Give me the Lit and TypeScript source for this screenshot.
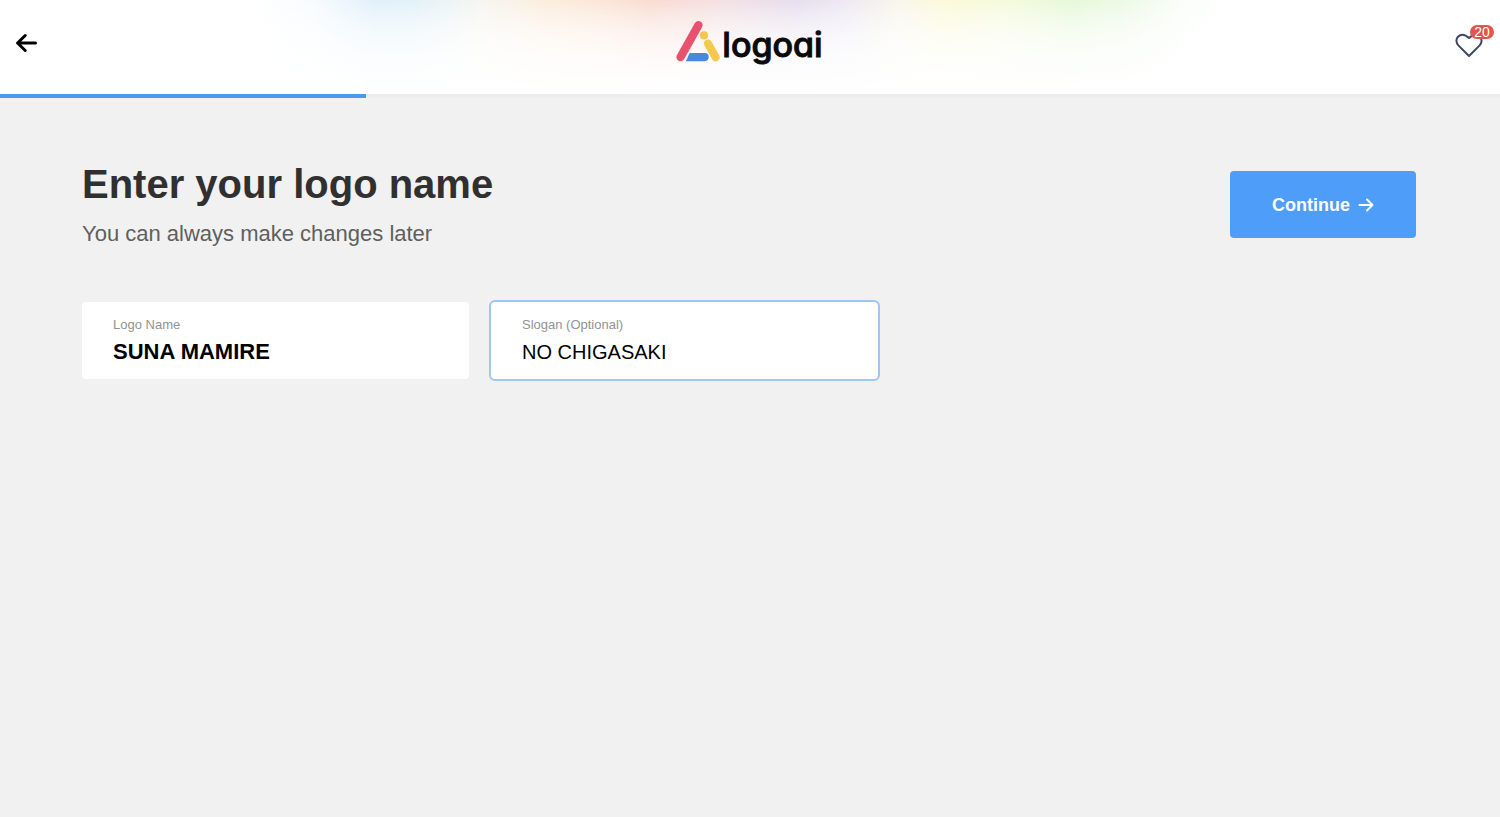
import { LitElement, html, css } from "lit";
import { customElement, state } from "lit/decorators.js";

@customElement("app-root")
export class AppRoot extends LitElement {
  @state() private logoName = "SUNA MAMIRE";
  @state() private slogan = "NO CHIGASAKI";
  @state() private favourites = 20;
  @state() private progress = 24.4;

  static styles = css`
    :host {
      display: block;
      min-height: 100vh;
      background: #f1f1f1;
      color: #303030;
      font-family: "Liberation Sans", Arial, sans-serif;
    }
    * {
      box-sizing: border-box;
    }
    .topbar {
      display: grid;
      grid-template-columns: 1fr auto 1fr;
      align-items: center;
      height: 94px;
      padding: 0 17px 8px 16px;
      background:
        linear-gradient(
          rgba(255, 255, 255, 0.05) 0,
          rgba(255, 255, 255, 0.4) 16px,
          rgba(255, 255, 255, 0.68) 34px,
          rgba(255, 255, 255, 0.86) 56px,
          #fff 92px
        ),
        linear-gradient(
          90deg,
          #fff 17%,
          #f6fbfe 21%,
          #dff0f9 25%,
          #e0f1f9 27.5%,
          #f5f5f0 32%,
          #fcecdb 36.5%,
          #fbe5d7 40%,
          #f9d9cf 43.5%,
          #f3dfe0 48%,
          #e5dced 53%,
          #ebe6f2 56%,
          #f8f6ea 60%,
          #fbf9d7 63%,
          #f4fadb 67%,
          #e4f8d8 71.5%,
          #ecf9e4 75%,
          #fafefa 79%,
          #fff 82%
        );
    }
    .icon-button {
      display: flex;
      padding: 0;
      border: 0;
      background: none;
      color: #000;
      cursor: pointer;
    }
    .favourites {
      position: relative;
      justify-self: end;
      color: #3f4564;
      padding-top: 4px;
    }
    .badge {
      position: absolute;
      top: -4px;
      right: -11px;
      min-width: 24px;
      padding: 0 4px;
      border-radius: 7px;
      background: #e5534d;
      color: #fff;
      font-size: 14px;
      line-height: 14px;
      text-align: center;
    }
    .brand {
      display: flex;
      align-items: center;
      gap: 1px;
      color: #0a0a0a;
      text-decoration: none;
    }
    .mark {
      display: block;
      margin-bottom: 4px;
    }
    .wordmark {
      font-family: Inter, "Liberation Sans", sans-serif;
      font-size: 34px;
      font-weight: 500;
      line-height: 44px;
      font-feature-settings: "cv11";
      -webkit-text-stroke: 1px currentColor;
      padding-top: 4px;
    }
    .track {
      height: 4px;
      background: linear-gradient(#ebebeb, #efefef);
    }
    .bar {
      height: 4px;
      background: #4b98ee;
    }
    .page {
      padding: 62px 84px 62px 82px;
    }
    .intro {
      display: flex;
      align-items: center;
      justify-content: space-between;
      gap: 24px;
    }
    .title {
      margin: 0 0 12px;
      font-size: 40px;
      line-height: 48px;
      font-weight: 700;
    }
    .subtitle {
      margin: 0;
      font-size: 22px;
      line-height: 28px;
      color: #5f5f5f;
    }
    .continue {
      display: flex;
      align-items: center;
      gap: 8px;
      padding: 23px 42px 21px;
      border: 0;
      border-radius: 4px;
      background: #4d9df9;
      color: #fff;
      font: 700 18px/23px "Liberation Sans", Arial, sans-serif;
      cursor: pointer;
    }
    .fields {
      display: grid;
      grid-template-columns: 3fr 3fr 4fr;
      column-gap: 22px;
      margin-top: 54px;
    }
    .field {
      display: flex;
      flex-direction: column;
      gap: 6px;
      padding: 14px 31px;
      border-radius: 4px;
      background: #fff;
    }
    .active {
      outline: 2px solid #a0c6f3;
    }
    .label {
      font-size: 13px;
      line-height: 17px;
      color: #929292;
    }
    .input {
      width: 100%;
      padding: 0;
      border: 0;
      outline: 0;
      background: none;
      color: #000;
      font: 400 20px/26px "Liberation Sans", Arial, sans-serif;
    }
    .strong {
      font-size: 22px;
      font-weight: 700;
    }
  `;

  render() {
    return html`
      <header class="topbar">
        <button class="icon-button" type="button" aria-label="Back">
          <svg width="24" height="24" viewBox="0 0 24 24" fill="none" stroke="currentColor" stroke-width="3" stroke-linecap="round" stroke-linejoin="round">
            <path d="M1.6 12H19.5M9.2 4.5L1.6 12L9.2 19.5" />
          </svg>
        </button>
        <a class="brand" href="#" aria-label="logoai">
          <svg class="mark" width="45" height="42" viewBox="0 0 45 42">
            <path d="M4.6 37L22.4 5.2" stroke="#e9526f" stroke-width="8.4" stroke-linecap="round" />
            <circle cx="28" cy="15.4" r="4.1" fill="#f5c74c" />
            <path d="M32 23.6L39.6 37.2" stroke="#f5c74c" stroke-width="8" stroke-linecap="round" />
            <path d="M14 33H28.6A4.1 4.1 0 0 1 28.6 41.2H9.6Q11 39 12 36.4Q12.8 34 14 33Z" fill="#4489db" />
          </svg>
          <span class="wordmark">logoai</span>
        </a>
        <button class="icon-button favourites" type="button" aria-label="Favourites">
          <svg width="28" height="25" viewBox="0 0 28 25" fill="none" stroke="currentColor" stroke-width="2" stroke-linejoin="round">
            <path d="M14 23L3.6 12.6C.8 9.8.8 6 3 3.8C6 .8 10 1.2 14 5C18 1.2 22 .8 25 3.8C27.2 6 27.2 9.8 24.4 12.6Z" />
          </svg>
          <span class="badge">${this.favourites}</span>
        </button>
      </header>
      <div class="track"><div class="bar" style="width:${this.progress}%"></div></div>
      <main class="page">
        <div class="intro">
          <div>
            <h1 class="title">Enter your logo name</h1>
            <p class="subtitle">You can always make changes later</p>
          </div>
          <button class="continue" type="button">
            Continue
            <svg width="16" height="16" viewBox="0 0 16 16" fill="none" stroke="currentColor" stroke-width="1.9" stroke-linecap="round" stroke-linejoin="round">
              <path d="M1.5 8H14.5M9 2.5L14.5 8L9 13.5" />
            </svg>
          </button>
        </div>
        <form class="fields">
          <div class="field">
            <label class="label" for="logo-name">Logo Name</label>
            <input class="input strong" id="logo-name" type="text" .value=${this.logoName}
              @input=${(e: Event) => (this.logoName = (e.target as HTMLInputElement).value)} />
          </div>
          <div class="field active">
            <label class="label" for="slogan">Slogan (Optional)</label>
            <input class="input" id="slogan" type="text" .value=${this.slogan}
              @input=${(e: Event) => (this.slogan = (e.target as HTMLInputElement).value)} />
          </div>
        </form>
      </main>
    `;
  }
}
